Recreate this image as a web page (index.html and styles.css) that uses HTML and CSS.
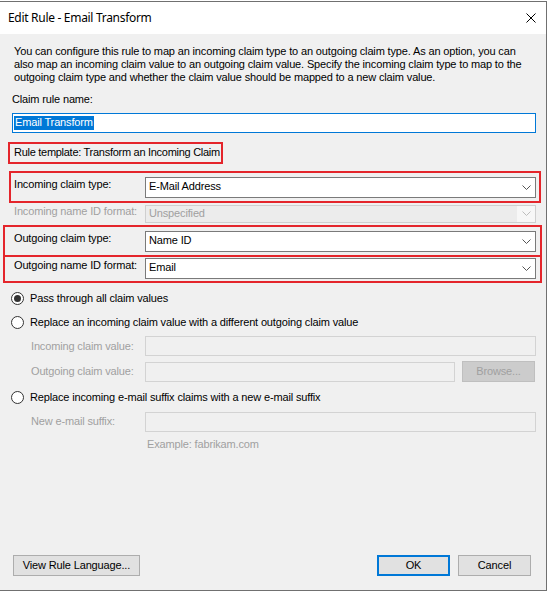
FILE: index.html
```html
<!DOCTYPE html>
<html>
<head>
<meta charset="utf-8">
<link rel="stylesheet" href="styles.css">
</head>
<body>
<div class="window">
  <div class="titlebar">
    <span class="title">Edit Rule - Email Transform</span>
    <svg class="close" width="10" height="10" viewBox="0 0 10 10"><path d="M0.5 0.5L9.5 9.5M9.5 0.5L0.5 9.5" stroke="#000" stroke-width="1" fill="none"/></svg>
  </div>
  <div class="content">
    <p class="desc">You can configure this rule to map an incoming claim type to an outgoing claim type. As an option, you can<br>also map an incoming claim value to an outgoing claim value. Specify the incoming claim type to map to the<br>outgoing claim type and whether the claim value should be mapped to a new claim value.</p>
    <div class="name-label">Claim rule name:</div>
    <div class="textbox"><span class="selected">Email Transform</span></div>
    <div class="template">Rule template: Transform an Incoming Claim</div>

    <div class="field f1">
      <span class="flabel">Incoming claim type:</span>
      <div class="combo"><span class="ctext">E-Mail Address</span><svg class="chev" width="9" height="5" viewBox="0 0 9 5"><path d="M0.5 0.5L4.5 4.5L8.5 0.5" stroke="#555" fill="none"/></svg></div>
      <span class="mark m1"></span>
    </div>
    <div class="field f2 disabled">
      <span class="flabel">Incoming name ID format:</span>
      <div class="combo"><span class="ctext">Unspecified</span><span class="chevbox"><svg class="chev" width="9" height="5" viewBox="0 0 9 5"><path d="M0.5 0.5L4.5 4.5L8.5 0.5" stroke="#bdbdbd" fill="none"/></svg></span></div>
    </div>
    <div class="field f3">
      <span class="flabel">Outgoing claim type:</span>
      <div class="combo"><span class="ctext">Name ID</span><svg class="chev" width="9" height="5" viewBox="0 0 9 5"><path d="M0.5 0.5L4.5 4.5L8.5 0.5" stroke="#555" fill="none"/></svg></div>
      <span class="mark m3"></span>
    </div>
    <div class="field f4">
      <span class="flabel">Outgoing name ID format:</span>
      <div class="combo"><span class="ctext">Email</span><svg class="chev" width="9" height="5" viewBox="0 0 9 5"><path d="M0.5 0.5L4.5 4.5L8.5 0.5" stroke="#555" fill="none"/></svg></div>
      <span class="mark m4"></span>
    </div>

    <div class="radio-row r1"><span class="radio checked"></span><span>Pass through all claim values</span></div>
    <div class="radio-row r2"><span class="radio"></span><span>Replace an incoming claim value with a different outgoing claim value</span></div>
    <div class="sub s1"><span class="slabel">Incoming claim value:</span><div class="dbox wide"></div></div>
    <div class="sub s2"><span class="slabel">Outgoing claim value:</span><div class="dbox narrow"></div><span class="browse">Browse...</span></div>
    <div class="radio-row r3"><span class="radio"></span><span>Replace incoming e-mail suffix claims with a new e-mail suffix</span></div>
    <div class="sub s3"><span class="slabel sl3">New e-mail suffix:</span><div class="dbox wide"></div></div>
    <div class="example">Example: fabrikam.com</div>
  </div>
  <div class="footer">
    <span class="btn view">View Rule Language...</span>
    <span class="spacer"></span>
    <span class="btn ok">OK</span>
    <span class="btn cancel">Cancel</span>
  </div>
</div>
</body>
</html>
```
FILE: styles.css
```css
* { box-sizing: border-box; }
body {
  margin: 0;
  background: #fff;
  font-family: "Liberation Sans", Arial, sans-serif;
  font-size: 11px;
  line-height: 13px;
  color: #000;
  letter-spacing: -0.15px;
}
.window {
  margin-top: 1px;
  width: 547px;
  height: 590px;
  border-top: 1px solid #707070;
  border-right: 1px solid #707070;
  border-bottom: 1px solid #707070;
  background: #f0f0f0;
  display: flex;
  flex-direction: column;
}
.titlebar {
  flex: none;
  height: 32px;
  background: #fff;
  display: flex;
  align-items: center;
  justify-content: space-between;
  padding: 0 10px 0 8px;
}
.title {
  font-family: "Noto Sans", "Open Sans", sans-serif;
  font-size: 12px;
  letter-spacing: -0.3px;
  line-height: 16px;
}
.close { display: block; }
.content {
  flex: 1;
  padding-left: 12px;
}
.desc { margin: 11px 0 0 2px; white-space: nowrap; }
.name-label { margin-top: 9px; }
.textbox {
  margin-top: 7px;
  width: 524px;
  height: 20px;
  border: 1px solid #0078d7;
  background: #fff;
  padding: 2px 0 0 1px;
}
.selected {
  display: inline-block;
  background: #0078d7;
  color: #fff;
  padding: 0 1px;
  height: 14px;
}
.template {
  margin: 9px 0 0 -4px;
  width: 215px;
  height: 22px;
  border: 2px solid #e4252b;
  padding: 2px 0 0 4px;
  white-space: nowrap;
  letter-spacing: -0.28px;
}
.field {
  position: relative;
  display: flex;
  align-items: flex-start;
  height: 21px;
}
.f1 { margin-top: 13px; }
.f2 { margin-top: 7px; height: 18px; }
.f3 { margin-top: 8px; }
.f4 { margin-top: 6px; }
.flabel {
  width: 133px;
  padding: 1px 0 0 2px;
  white-space: nowrap;
}
.combo {
  width: 391px;
  height: 100%;
  border: 1px solid #7a7a7a;
  background: #fff;
  display: flex;
  align-items: center;
  justify-content: space-between;
  padding: 0 4px 0 3px;
}
.ctext { align-self: flex-start; padding-top: 2px; }
.chev { display: block; margin-top: -1px; }
.disabled .flabel { color: #a0a0a0; padding-top: 0; }
.disabled .combo {
  border-color: #cfcfcf;
  background: #ececec;
  padding: 0 0 0 3px;
}
.disabled .ctext { color: #a0a0a0; padding-top: 1px; }
.chevbox {
  height: 100%;
  width: 18px;
  background: #f7f7f7;
  display: flex;
  align-items: center;
  justify-content: center;
}
.mark {
  position: absolute;
  border: 2px solid #e4252b;
  pointer-events: none;
}
.m1 { left: -3px; top: -6px; width: 532px; height: 32px; }
.m3 { left: -9px; top: -6px; width: 539px; height: 32px; }
.m4 { left: -9px; top: -3px; width: 539px; height: 28px; }

.radio-row {
  display: flex;
  align-items: flex-start;
  height: 13px;
  margin-left: -1px;
  white-space: nowrap;
}
.r1 { margin-top: 13px; }
.r2 { margin-top: 11px; }
.r3 { margin-top: 9px; }
.radio {
  flex: none;
  width: 13px;
  height: 13px;
  border: 1px solid #333;
  border-radius: 50%;
  background: #fff;
  margin-right: 6px;
  display: flex;
  align-items: center;
  justify-content: center;
}
.radio.checked::after {
  content: "";
  width: 7px;
  height: 7px;
  border-radius: 50%;
  background: #333;
}
.sub {
  display: flex;
  align-items: flex-start;
  height: 20px;
}
.s1 { margin-top: 7px; }
.s2 { margin-top: 5px; height: 21px; }
.s3 { margin-top: 8px; }
.slabel {
  width: 133px;
  padding: 4px 0 0 19px;
  color: #a0a0a0;
  white-space: nowrap;
}
.sl3 { padding-top: 3px; }
.dbox {
  height: 20px;
  border: 1px solid #d3d3d3;
  background: #f0f0f0;
}
.wide { width: 391px; }
.narrow { width: 310px; margin-top: 1px; }
.browse {
  width: 73px;
  height: 21px;
  margin-left: 7px;
  background: #cccccc;
  border: 1px solid #bfbfbf;
  color: #a0a0a0;
  display: flex;
  align-items: center;
  justify-content: center;
}
.example {
  margin: 6px 0 0 135px;
  color: #a0a0a0;
}
.footer {
  flex: none;
  display: flex;
  padding: 0 15px 14px 13px;
}
.spacer { flex: 1; }
.btn {
  height: 21px;
  background: #e1e1e1;
  border: 1px solid #adadad;
  display: flex;
  align-items: center;
  justify-content: center;
}
.view { width: 127px; }
.ok { width: 73px; border: 2px solid #0078d7; }
.cancel { width: 73px; margin-left: 8px; }
```
